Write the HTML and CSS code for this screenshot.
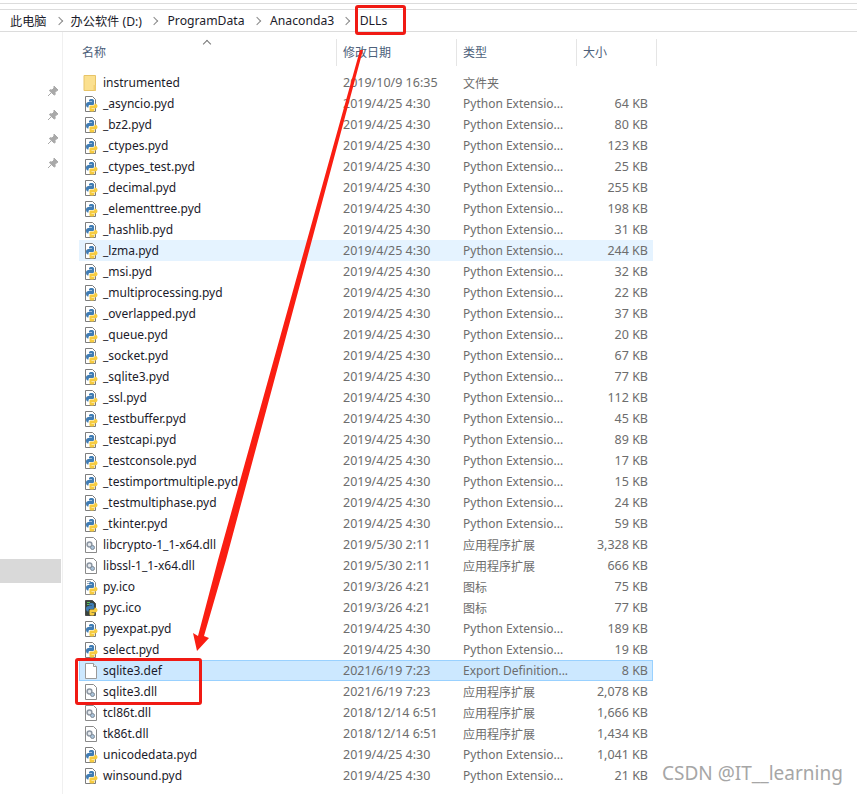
FILE: index.html
```html
<!DOCTYPE html>
<html lang="zh-CN">
<head>
  <meta charset="UTF-8">
  <title>DLLs</title>
  <link rel="stylesheet" href="styles.css">
</head>
<body>
  <svg width="0" height="0" class="defs">
    <defs>
      <symbol id="logo" viewBox="0 0 16 16">
        <path d="M5 11.5C3.5 11.5 3 10 3 8.5S4 6 5.5 6H9V5.5H6V4.5C6 3.5 7 3 8.5 3S11 3.5 11 4.5V7.5C11 8.5 10.5 9 9.5 9H7C6 9 5.5 9.5 5.5 10.5V11.5Z" fill="#3f7cb4"/>
        <path d="M11.5 7.5C13 7.5 14.5 8.5 14.5 10S13.5 12.5 12 12.5H8.5V13H11.5V14C11.5 15 10.5 15.5 9 15.5S6.5 15 6.5 14V11C6.5 10 7 9.5 8 9.5H10.5C11 9.5 11.5 9 11.5 8.5Z" fill="#f6cb3f"/>
      </symbol>
      <symbol id="snake" viewBox="0 0 16 16">
        <path d="M2.5 .5h7l3 3v12h-10z" fill="#fff" stroke="#7d7d7d"/>
        <use href="#logo" width="16" height="16"/>
      </symbol>
      <symbol id="snake-dark" viewBox="0 0 16 16">
        <path d="M2.5 .5h7l3 3v12h-10z" fill="#38443f" stroke="#4a4a4a"/>
        <path d="M4 2.5h3M4 4.5h2" stroke="#5fc060" fill="none"/>
        <use href="#logo" width="16" height="16"/>
      </symbol>
      <symbol id="ico" viewBox="0 0 16 16">
        <path d="M2.5 .5h7l3 3v12h-10z" fill="#fff" stroke="#8a8a8a"/>
        <path d="M4 2.5h4M4 4.500h3" stroke="#9ab" fill="none"/>
        <use href="#logo" width="16" height="16"/>
      </symbol>
      <symbol id="dll" viewBox="0 0 16 16">
        <path d="M2.5 .5h8l3 3v12h-11z" fill="#fff" stroke="#8a8a8a"/>
        <circle cx="6.5" cy="7.5" r="2.4" fill="#e8ecf0" stroke="#8d97a3" stroke-width="1.5"/>
        <circle cx="9.5" cy="10.5" r="2" fill="#a9c3da" stroke="#7f8a96"/>
      </symbol>
      <symbol id="blank" viewBox="0 0 16 16">
        <path d="M2.5 .5h8l3 3v12h-11z" fill="#fff" stroke="#9a9a9a"/>
        <path d="M10.5 .5v3h3" fill="#f2f2f2" stroke="#9a9a9a"/>
      </symbol>
      <symbol id="folder" viewBox="0 0 16 16">
        <path d="M1 .5h11.5v15H1z" fill="#fbe08f" stroke="#e7c468"/>
        <path d="M12.5 10v5.5h-2V10z" fill="#f3cf70"/>
      </symbol>
      <symbol id="pin" viewBox="0 0 12 12">
        <path d="M7 1l4 4-1 .5-2 2 .2 2-1 .5L2.5 5.8l.5-1 2 .2 2-2zM4.5 7.5L1 11" fill="#a9a9a9" stroke="#a9a9a9"/>
      </symbol>
    </defs>
  </svg>

  <div class="top-lines"></div>

  <nav class="crumbs">
    <span>此电脑</span><i class="sep"></i>
    <span>办公软件 (D:)</span><i class="sep"></i>
    <span>ProgramData</span><i class="sep"></i>
    <span>Anaconda3</span><i class="sep"></i>
    <span>DLLs</span>
  </nav>

  <div class="explorer">
    <aside class="nav">
      <svg class="pin"><use href="#pin"/></svg>
      <svg class="pin"><use href="#pin"/></svg>
      <svg class="pin"><use href="#pin"/></svg>
      <svg class="pin"><use href="#pin"/></svg>
      <div class="nav-current"></div>
    </aside>

    <main class="files">
      <div class="head">
        <div class="h-name">名称<span class="caret"></span></div>
        <div class="h-date">修改日期</div>
        <div class="h-type">类型</div>
        <div class="h-size">大小</div>
      </div>
      <div id="rows"></div>
    </main>
  </div>

  <!-- 标注 -->
  <div class="mark mark-dlls"></div>
  <div class="mark mark-sqlite"></div>
  <svg class="arrow" width="857" height="794" viewBox="0 0 857 794">
    <path d="M360 50L363 50 226 560 204 636 209 638 197 651 193 633 198 636 218 560z" fill="#fa1e12"/>
  </svg>
  <div class="watermark">CSDN @IT__learning</div>

  <script src="rows.js"></script>
</body>
</html>
```

FILE: styles.css
```css
body {
  margin: 0;
  width: 857px;
  height: 794px;
  overflow: hidden;
  position: relative;
  background-color: #fff;
  font-family: "Noto Sans", "Noto Sans CJK SC", sans-serif;
  font-size: 12px;
  color: #1b1b2a;
}

.defs {
  display: none;
}

.top-lines {
  height: 5px;
  margin-top: 3px;
  border-top: 1px solid #dcdcdc;
  border-bottom: 1px solid #dcdcdc;
}

.crumbs {
  height: 21px;
  display: flex;
  align-items: center;
  padding-left: 10px;
  border-bottom: 1px solid #dcdcdc;
  font-size: 12.2px;
}

.crumbs .sep {
  width: 5px;
  height: 5px;
  margin: 0 10.5px 0 9px;
  border-top: 1px solid #8a8a8a;
  border-right: 1px solid #8a8a8a;
  transform: rotate(45deg);
}

.crumbs .sep:first-of-type {
  margin-right: 9px;
}

.explorer {
  display: flex;
  height: 762px;
}

.nav {
  width: 63px;
  flex: none;
  border-right: 1px solid #f0f0f0;
  display: flex;
  flex-direction: column;
  box-sizing: border-box;
}

.pin {
  width: 12px;
  height: 12px;
  margin: 0 0 12px 47px;
}

.pin:first-child {
  margin-top: 53px;
}

.nav-current {
  width: 61px;
  height: 24px;
  margin-top: 378px;
  background-color: #d9d9d9;
}

.files {
  width: 590px;
  margin-left: 16px;
}

.head {
  display: flex;
  height: 27px;
  margin-top: 7px;
  margin-bottom: 6px;
  color: #4c607a;
  line-height: 27px;
  position: relative;
}

.head > div {
  box-sizing: border-box;
  border-right: 1px solid #e5e5e5;
}

.h-name { width: 258px; padding-left: 3px; }
.h-date { width: 120px; padding-left: 6px; }
.h-type { width: 120px; padding-left: 6px; }
.h-size { width: 80px; padding-left: 6px; }

.caret {
  position: absolute;
  left: 125px;
  top: 2px;
  width: 5px;
  height: 5px;
  border-top: 1px solid #777;
  border-left: 1px solid #777;
  transform: rotate(45deg);
}

.row {
  display: flex;
  align-items: center;
  height: 21px;
  width: 574px;
  color: #6d6d6d;
  white-space: nowrap;
}

.row.hover {
  background-color: #e5f3ff;
}

.row.selected {
  background-color: #cce8ff;
  box-shadow: inset 0 0 0 1px #99d1ff;
}

.row .name {
  width: 258px;
  flex: none;
  display: flex;
  align-items: center;
  color: #1b1b2a;
  box-sizing: border-box;
  padding-left: 4px;
}

.row .icon {
  width: 16px;
  height: 16px;
  flex: none;
  margin-right: 4px;
}

.row .date {
  width: 120px;
  flex: none;
  padding-left: 6px;
  box-sizing: border-box;
  font-size: 12.5px;
}

.row .type {
  width: 115px;
  flex: none;
  padding-left: 6px;
  box-sizing: border-box;
}

.row .size {
  width: 76px;
  flex: none;
  text-align: right;
  font-size: 12.5px;
}

.mark {
  position: absolute;
  border: 3px solid #f01a14;
  border-radius: 3px;
  box-sizing: border-box;
}

.mark-dlls {
  left: 355px;
  top: 5px;
  width: 51px;
  height: 30px;
}

.mark-sqlite {
  left: 75px;
  top: 658px;
  width: 127px;
  height: 47px;
}

.arrow {
  position: absolute;
  left: 0;
  top: 0;
}

.watermark {
  position: absolute;
  left: 662px;
  top: 759px;
  font-size: 19px;
  line-height: 28px;
  color: #a6a6a6;
}
```

FILE: rows.js
```js
const EXT = 'Python Extensio...';
const DLL = '应用程序扩展';
const ICON = '图标';

const files = [
  ['instrumented', 'folder', '2019/10/9 16:35', '文件夹', ''],
  ['_asyncio.pyd', 'snake', '2019/4/25 4:30', EXT, '64 KB'],
  ['_bz2.pyd', 'snake', '2019/4/25 4:30', EXT, '80 KB'],
  ['_ctypes.pyd', 'snake', '2019/4/25 4:30', EXT, '123 KB'],
  ['_ctypes_test.pyd', 'snake', '2019/4/25 4:30', EXT, '25 KB'],
  ['_decimal.pyd', 'snake', '2019/4/25 4:30', EXT, '255 KB'],
  ['_elementtree.pyd', 'snake', '2019/4/25 4:30', EXT, '198 KB'],
  ['_hashlib.pyd', 'snake', '2019/4/25 4:30', EXT, '31 KB'],
  ['_lzma.pyd', 'snake', '2019/4/25 4:30', EXT, '244 KB', 'hover'],
  ['_msi.pyd', 'snake', '2019/4/25 4:30', EXT, '32 KB'],
  ['_multiprocessing.pyd', 'snake', '2019/4/25 4:30', EXT, '22 KB'],
  ['_overlapped.pyd', 'snake', '2019/4/25 4:30', EXT, '37 KB'],
  ['_queue.pyd', 'snake', '2019/4/25 4:30', EXT, '20 KB'],
  ['_socket.pyd', 'snake', '2019/4/25 4:30', EXT, '67 KB'],
  ['_sqlite3.pyd', 'snake', '2019/4/25 4:30', EXT, '77 KB'],
  ['_ssl.pyd', 'snake', '2019/4/25 4:30', EXT, '112 KB'],
  ['_testbuffer.pyd', 'snake', '2019/4/25 4:30', EXT, '45 KB'],
  ['_testcapi.pyd', 'snake', '2019/4/25 4:30', EXT, '89 KB'],
  ['_testconsole.pyd', 'snake', '2019/4/25 4:30', EXT, '17 KB'],
  ['_testimportmultiple.pyd', 'snake', '2019/4/25 4:30', EXT, '15 KB'],
  ['_testmultiphase.pyd', 'snake', '2019/4/25 4:30', EXT, '24 KB'],
  ['_tkinter.pyd', 'snake', '2019/4/25 4:30', EXT, '59 KB'],
  ['libcrypto-1_1-x64.dll', 'dll', '2019/5/30 2:11', DLL, '3,328 KB'],
  ['libssl-1_1-x64.dll', 'dll', '2019/5/30 2:11', DLL, '666 KB'],
  ['py.ico', 'ico', '2019/3/26 4:21', ICON, '75 KB'],
  ['pyc.ico', 'snake-dark', '2019/3/26 4:21', ICON, '77 KB'],
  ['pyexpat.pyd', 'snake', '2019/4/25 4:30', EXT, '189 KB'],
  ['select.pyd', 'snake', '2019/4/25 4:30', EXT, '19 KB'],
  ['sqlite3.def', 'blank', '2021/6/19 7:23', 'Export Definition...', '8 KB', 'selected'],
  ['sqlite3.dll', 'dll', '2021/6/19 7:23', DLL, '2,078 KB'],
  ['tcl86t.dll', 'dll', '2018/12/14 6:51', DLL, '1,666 KB'],
  ['tk86t.dll', 'dll', '2018/12/14 6:51', DLL, '1,434 KB'],
  ['unicodedata.pyd', 'snake', '2019/4/25 4:30', EXT, '1,041 KB'],
  ['winsound.pyd', 'snake', '2019/4/25 4:30', EXT, '21 KB'],
];

document.getElementById('rows').innerHTML = files.map(([name, icon, date, type, size, state]) => `
  <div class="row ${state || ''}">
    <div class="name"><svg class="icon"><use href="#${icon}"/></svg>${name}</div>
    <div class="date">${date}</div>
    <div class="type">${type}</div>
    <div class="size">${size}</div>
  </div>`).join('');
```
